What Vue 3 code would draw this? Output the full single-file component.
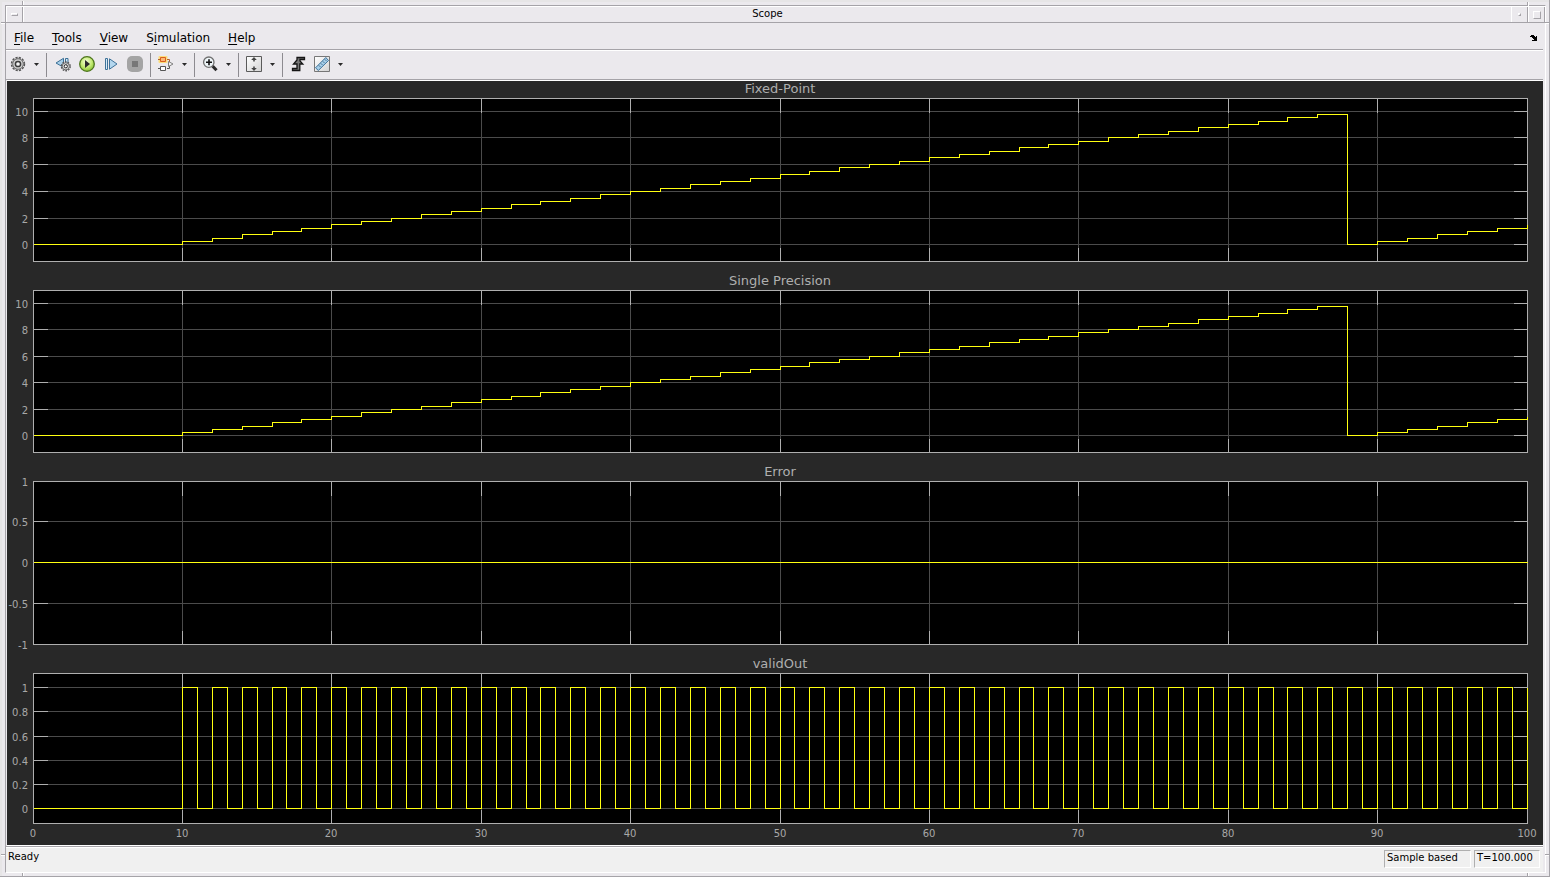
<script setup>
import { ref, computed, onMounted, onBeforeUnmount } from 'vue'

const menus = [
  { before: '', key: 'F', after: 'ile' },
  { before: '', key: 'T', after: 'ools' },
  { before: '', key: 'V', after: 'iew' },
  { before: 'S', key: 'i', after: 'mulation' },
  { before: '', key: 'H', after: 'elp' },
]

const canvas = ref(null)
const size = ref({ w: 1536, h: 764 })
let observer
function measure() {
  size.value = { w: canvas.value.clientWidth, h: canvas.value.clientHeight }
}
onMounted(() => {
  measure()
  observer = new ResizeObserver(measure)
  observer.observe(canvas.value)
})
onBeforeUnmount(() => observer.disconnect())

// Signals are zero-order-hold samples: [time, value]
const ramp = [[0, 0]]
for (let t = 10; t < 88; t += 2) ramp.push([t, (t - 8) / 8])
ramp.push([88, 0])
for (let t = 90; t <= 100; t += 2) ramp.push([t, (t - 88) / 8])
const pulses = [[0, 0]]
for (let t = 10; t <= 100; t += 1) pulses.push([t, t % 2 ? 0 : 1])

const axes = [
  { title: 'Fixed-Point', min: -1.22, max: 10.97, ticks: [0, 2, 4, 6, 8, 10], data: ramp },
  { title: 'Single Precision', min: -1.22, max: 10.97, ticks: [0, 2, 4, 6, 8, 10], data: ramp },
  { title: 'Error', min: -1, max: 1, ticks: [-1, -0.5, 0, 0.5, 1], data: [[0, 0], [100, 0]] },
  { title: 'validOut', min: -0.12, max: 1.12, ticks: [0, 0.2, 0.4, 0.6, 0.8, 1], data: pulses },
]
const times = [0, 10, 20, 30, 40, 50, 60, 70, 80, 90, 100]
const LEFT = 26
const RIGHT = 16
const HEAD = 17
const FOOT = 22
const TICK = 14

const plots = computed(() => {
  const { w, h } = size.value
  const width = w - LEFT - RIGHT
  const pitch = (h + 2) / 4
  const x = (t) => LEFT + Math.floor((t / 100) * width)
  return axes.map((axis, i) => {
    const top = Math.round(HEAD + i * pitch)
    const bottom = i === 3 ? h - FOOT : Math.round(HEAD + i * pitch + pitch - 29)
    const y = (v) => top + Math.floor(((axis.max - v) / (axis.max - axis.min)) * (bottom - top) + 0.2)
    const right = LEFT + width
    let trace = ''
    axis.data.forEach(([t, v], n) => {
      trace += n === 0 ? `M${x(t)} ${y(v)}` : `H${x(t)}V${y(v)}`
    })
    const inner = times.slice(1, -1).map(x)
    const rows = axis.ticks.map(y)
    return {
      title: axis.title,
      top,
      bottom,
      width,
      mid: LEFT + width / 2,
      grid: inner.map((p) => `M${p} ${top}V${bottom}`).join('') + rows.map((p) => `M${LEFT} ${p}H${right}`).join(''),
      marks:
        inner.map((p) => `M${p} ${top}v${TICK}M${p} ${bottom}v-${TICK}`).join('') +
        rows.map((p) => `M${LEFT} ${p}h${TICK}M${right} ${p}h-${TICK}`).join(''),
      trace,
      labels: axis.ticks.map((v) => ({ text: String(v), y: y(v) + 5 })),
    }
  })
})
const timeLabels = computed(() =>
  times.map((t) => ({ text: String(t), x: LEFT + Math.floor((t / 100) * (size.value.w - LEFT - RIGHT)) })),
)
</script>

<template>
  <div class="window">
    <span class="notch top-left"></span><span class="notch top-right"></span>
    <span class="notch bottom-left"></span><span class="notch bottom-right"></span>
    <span class="side left-top"></span><span class="side right-top"></span>
    <span class="side left-bottom"></span><span class="side right-bottom"></span>
    <div class="inner">
      <header class="titlebar">
        <button class="win-btn" aria-label="Window menu"><span class="bar"></span></button>
        <h1>Scope</h1>
        <button class="win-btn" aria-label="Minimize"><span class="dot"></span></button>
        <button class="win-btn" aria-label="Maximize"><span class="square"></span></button>
      </header>
      <nav class="menubar">
        <button v-for="m in menus" :key="m.key">{{ m.before }}<u>{{ m.key }}</u>{{ m.after }}</button>
        <button class="dock" aria-label="Dock">
          <svg width="8" height="6" shape-rendering="crispEdges"><path d="M1 0h3v1h1v1h1V1h1v5H2V5h2V4H3V3H2V2H0V1h1z" /></svg>
        </button>
      </nav>
      <div class="toolbar">
        <div class="group first">
          <button aria-label="Configuration properties">
            <svg width="16" height="16" viewBox="0 0 16 16">
              <circle cx="8" cy="8" r="6.4" fill="none" stroke="#555" stroke-width="1.6" stroke-dasharray="2.2 1.15" />
              <circle cx="8" cy="8" r="5.3" fill="#cfcfcf" stroke="#6b6b6b" />
              <circle cx="8" cy="8" r="2.6" fill="#f4f4f4" stroke="#3a3a3a" stroke-width="1.5" />
            </svg>
          </button>
          <button class="arrow" aria-label="Configuration menu"><svg width="5" height="3"><path d="M0 0h5L2.500 3z" /></svg></button>
        </div>
        <div class="group">
          <button aria-label="Step back options">
            <svg width="16" height="16" viewBox="0 0 16 16">
              <path d="M8.500 2.300v9L1 7z" fill="#a9d0ea" stroke="#3b6f95" />
              <path d="M10.500 2.500h2.500V9h-2.500z" fill="#d3e9f7" stroke="#3b6f95" />
              <circle cx="10.800" cy="10.300" r="4.400" fill="none" stroke="#555" stroke-width="1.400" stroke-dasharray="1.700 1.060" />
              <circle cx="10.800" cy="10.300" r="3.600" fill="#d8d8d8" stroke="#6b6b6b" />
              <circle cx="10.800" cy="10.300" r="1.600" fill="#fff" stroke="#222" />
            </svg>
          </button>
          <button aria-label="Run">
            <svg width="16" height="16" viewBox="0 0 16 16">
              <defs><radialGradient id="go" cx=".45" cy=".35" r=".7"><stop offset="0" stop-color="#f6ffdc" /><stop offset=".55" stop-color="#c2ea72" /><stop offset="1" stop-color="#7dbb2a" /></radialGradient></defs>
              <circle cx="8" cy="8" r="7.300" fill="url(#go)" stroke="#4d741d" stroke-width="1.300" />
              <path d="M6 4l5 4-5 4z" fill="#2a2a2a" />
            </svg>
          </button>
          <button aria-label="Step forward">
            <svg width="16" height="16" viewBox="0 0 16 16">
              <path d="M2.500 2.500h2v11h-2z" fill="#d6ebf8" stroke="#3f7299" />
              <path d="M6.500 2.800v10.400L14 8z" fill="#b4d7ee" stroke="#3f7299" />
            </svg>
          </button>
          <button aria-label="Stop">
            <svg width="16" height="16" viewBox="0 0 16 16"><rect width="16" height="16" rx="5" fill="#a4a4a4" /><path d="M5 5h6v6H5z" fill="#777" /></svg>
          </button>
        </div>
        <div class="group">
          <button aria-label="Highlight block">
            <svg width="16" height="16" viewBox="0 0 16 16">
              <rect x=".5" width="9" height="7" rx="1" fill="#ffd966" opacity=".85" />
              <path d="M9 3.500h2.500V6" fill="none" stroke="#b8632c" />
              <path d="M9 12.500h2.500V10M0 12.500h2" fill="none" stroke="#555" />
              <path d="M0 3.500h2" stroke="#b8632c" />
              <path d="M2.500 1.500h5v4h-5z" fill="#fbb878" stroke="#d9601f" />
              <path d="M2.500 10.500h5v4h-5z" fill="#fff" stroke="#555" />
              <path d="M10.500 5.500L15 8l-4.500 2.500z" fill="#f4f4f4" stroke="#808080" />
            </svg>
          </button>
          <button class="arrow" aria-label="Highlight menu"><svg width="5" height="3"><path d="M0 0h5L2.500 3z" /></svg></button>
        </div>
        <div class="group">
          <button aria-label="Zoom">
            <svg width="16" height="16" viewBox="0 0 16 16">
              <path d="M10.500 10l4 4.300" stroke="#2a2a2a" stroke-width="3" />
              <circle cx="6.800" cy="6.200" r="5.200" fill="#eef5f8" stroke="#707070" stroke-width="1.300" />
              <path d="M7 3.200v6M4 6.200h6" stroke="#111" stroke-width="1.600" />
            </svg>
          </button>
          <button class="arrow" aria-label="Zoom menu"><svg width="5" height="3"><path d="M0 0h5L2.500 3z" /></svg></button>
        </div>
        <div class="group">
          <button aria-label="Scale axes">
            <svg width="16" height="16" viewBox="0 0 16 16">
              <defs><linearGradient id="sheet" x2="1" y2="1"><stop offset="0" stop-color="#fff" /><stop offset="1" stop-color="#d3d3d3" /></linearGradient></defs>
              <path d="M.5.5h15v15H.5z" fill="url(#sheet)" stroke="#5a5a5a" />
              <path d="M8 1l2.800 3H8.800v1.500H7.200V4H5.200zM8 15l2.800-3H8.800v-1.500H7.200V12H5.200z" fill="#444" />
            </svg>
          </button>
          <button class="arrow" aria-label="Scale menu"><svg width="5" height="3"><path d="M0 0h5L2.500 3z" /></svg></button>
        </div>
        <div class="group last">
          <button aria-label="Triggers">
            <svg width="16" height="16" viewBox="0 0 16 16">
              <path d="M2.500 12.500H7V8H3.500L7 4V1.500h7.500v2H10V5l2.800 3H9.800v6.500H2.500z" fill="#777" stroke="#151515" stroke-width="1.300" />
            </svg>
          </button>
          <button aria-label="Measurements">
            <svg width="16" height="16" viewBox="0 0 16 16">
              <path d="M.5.5h15v15H.5z" fill="url(#sheet)" stroke="#777" />
              <path d="M1.500 11.800L11.800 1.500 14.500 4.500 4.300 14.500z" fill="#a6cfea" stroke="#3f7299" />
              <path d="M5 9.500l1.200 1.200M7 7.500l1.200 1.200M9 5.500l1.200 1.200M11 3.500l1.200 1.200" stroke="#2a506e" />
            </svg>
          </button>
          <button class="arrow" aria-label="Measurements menu"><svg width="5" height="3"><path d="M0 0h5L2.500 3z" /></svg></button>
        </div>
      </div>
      <main ref="canvas" class="canvas">
        <svg class="scope" :viewBox="`0 0 ${size.w} ${size.h}`" role="img" aria-label="Scope signals">
          <g v-for="p in plots" :key="p.title">
            <text class="title" :x="p.mid" :y="p.top - 5">{{ p.title }}</text>
            <text v-for="l in p.labels" :key="l.text" class="tick" x="21" :y="l.y">{{ l.text }}</text>
            <g transform="translate(.5 .5)" class="lines">
              <rect :x="LEFT" :y="p.top" :width="p.width" :height="p.bottom - p.top" fill="#000" />
              <path :d="p.grid" stroke="#4b4b4b" />
              <path :d="p.marks" stroke="#afafaf" />
              <rect :x="LEFT" :y="p.top" :width="p.width" :height="p.bottom - p.top" fill="none" stroke="#afafaf" />
              <path :d="p.trace" stroke="#ffff11" fill="none" />
            </g>
          </g>
          <text v-for="l in timeLabels" :key="l.text" class="tick time" :x="l.x" :y="size.h - 8">{{ l.text }}</text>
        </svg>
      </main>
      <footer class="status">
        <span class="ready">Ready</span>
        <span class="cell mode">Sample based</span>
        <span class="cell clock">T=100.000</span>
      </footer>
    </div>
  </div>
</template>

<style>
body { margin: 0; }
</style>

<style scoped>
.window {
  position: relative;
  box-sizing: border-box;
  display: flex;
  height: 100vh;
  min-height: 400px;
  padding: 5px 3px 3px 5px;
  background: #ebe9ed;
  border-right: 1px solid #a5a3a8;
  border-bottom: 1px solid #a5a3a8;
  font-family: "DejaVu Sans", sans-serif;
  color: #000;
  box-shadow: inset 2px 2px #e6e5e6;
}
.inner {
  box-sizing: border-box;
  flex: 1;
  min-width: 0;
  display: flex;
  flex-direction: column;
  border: 1px solid #a5a3a8;
  border-right-color: #fff;
  border-bottom-color: #fff;
}
button { padding: 0; border: 0; background: none; font: inherit; color: inherit; }
.notch, .side { position: absolute; }
.notch { width: 1px; height: 4px; background: #a5a3a8; border-right: 1px solid #fff; }
.side { width: 4px; height: 1px; background: #a5a3a8; border-bottom: 1px solid #fff; }
.top-left { left: 22px; top: 1px; }
.top-right { right: 20px; top: 2px; }
.bottom-left { left: 22px; bottom: 0; height: 3px; }
.bottom-right { right: 20px; bottom: 0; height: 3px; }
.left-top { left: 1px; top: 22px; }
.right-top { right: 0; top: 22px; }
.left-bottom { left: 1px; bottom: 20px; }
.right-bottom { right: 0; bottom: 20px; }
.titlebar {
  display: flex;
  align-items: stretch;
  height: 15px;
  border-top: 1px solid #fff;
  border-bottom: 1px solid #a5a3a8;
}
h1 { flex: 1; margin: 0; text-align: center; font-size: 10px; font-weight: 400; line-height: 14px; border-left: 1px solid #fff; }
.win-btn {
  box-sizing: border-box;
  width: 17px;
  display: flex;
  align-items: center;
  justify-content: center;
  border-left: 1px solid #fff;
  border-right: 1px solid #a5a3a8;
}
.bar, .dot, .square { box-sizing: border-box; border: 1px solid #a5a3a8; border-top-color: #fff; border-left-color: #fff; }
.bar { width: 7px; height: 3px; }
.dot { width: 3px; height: 3px; }
.square { width: 8px; height: 8px; }
.menubar {
  box-sizing: border-box;
  display: flex;
  align-items: center;
  gap: 18px;
  height: 27px;
  padding: 3px 5px 0 8px;
  margin-right: 2px;
  border-bottom: 1px solid #a5a3a8;
  font-size: 12px;
  line-height: 16px;
}
.menubar u { text-underline-offset: 2px; }
.dock { margin-left: auto; display: flex; }
.toolbar {
  display: flex;
  align-items: center;
  height: 28px;
  margin-right: 2px;
  padding-left: 4px;
  border-top: 1px solid #fff;
  border-bottom: 1px solid #a5a3a8;
}
.group {
  box-sizing: border-box;
  display: flex;
  align-items: center;
  height: 24px;
  gap: 8px;
  padding: 0 7px 2px 0;
  margin-right: 7px;
  border-right: 1px solid #8d8b90;
}
.group.first { margin-right: 8px; }
.group.last { border: 0; }
.group button { display: flex; }
.arrow { fill: #2a2a2a; }
.canvas {
  flex: 1;
  min-height: 0;
  margin: 0 2px 0 1px;
  border-top: 1px solid #fff;
  border-bottom: 1px solid #fff;
  background: #282828;
  overflow: hidden;
}
.scope { display: block; width: 100%; height: 100%; }
.lines { shape-rendering: crispEdges; }
.title { font-size: 13px; text-anchor: middle; fill: #afafaf; }
.tick { font-size: 10px; text-anchor: end; fill: #a8a8a8; }
.time { text-anchor: middle; }
.status {
  box-sizing: border-box;
  display: flex;
  align-items: flex-start;
  gap: 3px;
  height: 26px;
  padding: 3px 3px 0 2px;
  margin-right: 2px;
  background: #f0f0f0;
  border-top: 1px solid #a5a3a8;
  box-shadow: inset 0 1px #fff;
  font-size: 10px;
  line-height: 13px;
}
.ready { flex: 1; }
.cell { box-sizing: border-box; height: 18px; padding: 0 2px; border: 1px solid #afafaf; border-right-color: #fff; border-bottom-color: #fff; }
.mode { width: 87px; }
.clock { width: 66px; }
</style>
